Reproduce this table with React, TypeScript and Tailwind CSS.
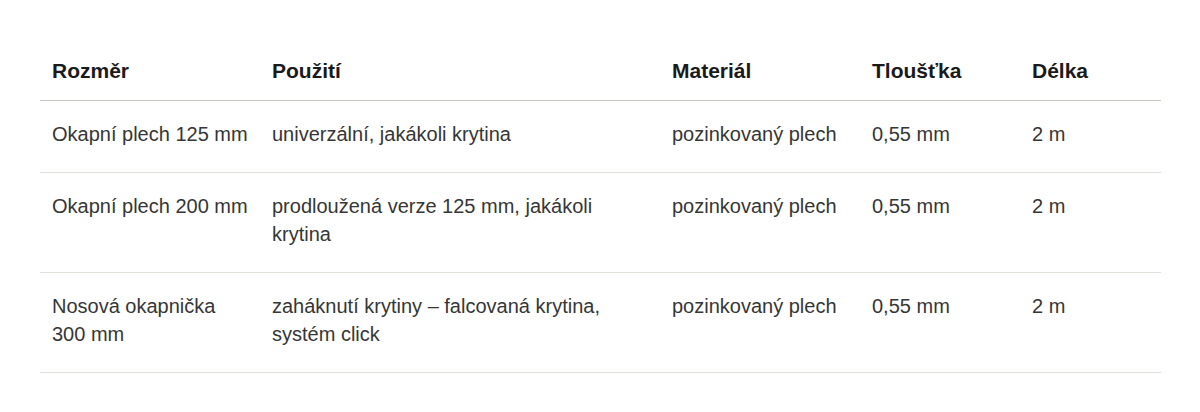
import React from "react";

const rows = [
  ["Okapní plech 125 mm", "univerzální, jakákoli krytina", "pozinkovaný plech", "0,55 mm", "2 m"],
  ["Okapní plech 200 mm", "prodloužená verze 125 mm, jakákoli krytina", "pozinkovaný plech", "0,55 mm", "2 m"],
  ["Nosová okapnička 300 mm", "zaháknutí krytiny – falcovaná krytina, systém click", "pozinkovaný plech", "0,55 mm", "2 m"],
];

const widths = ["w-[220px]", "w-[400px]", "w-[200px]", "w-[160px]", "w-[141px]"];

export default function App() {
  return (
    <div className="bg-white w-[1200px] h-[412px] pt-[40px] px-[40px]" style={{ fontFamily: '"Liberation Sans", Arial, sans-serif' }}>
      <table className="w-[1121px] border-collapse table-fixed text-[20px] leading-[28px] text-[#363636]">
        <thead>
          <tr className="border-b border-[#cbc8c0]">
            {["Rozměr", "Použití", "Materiál", "Tloušťka", "Délka"].map((h, i) => (
              <th key={h} className={`${widths[i]} text-left font-bold text-[21px] text-[#1a1a1a] px-3 pt-[17px] pb-[15px] align-top`}>{h}</th>
            ))}
          </tr>
        </thead>
        <tbody>
          {rows.map((r, ri) => (
            <tr key={ri} className="border-b border-[#e3e0d9]">
              {r.map((c, ci) => (
                <td key={ci} className="px-3 pt-[19px] pb-[24px] align-top">{c}</td>
              ))}
            </tr>
          ))}
        </tbody>
      </table>
    </div>
  );
}
